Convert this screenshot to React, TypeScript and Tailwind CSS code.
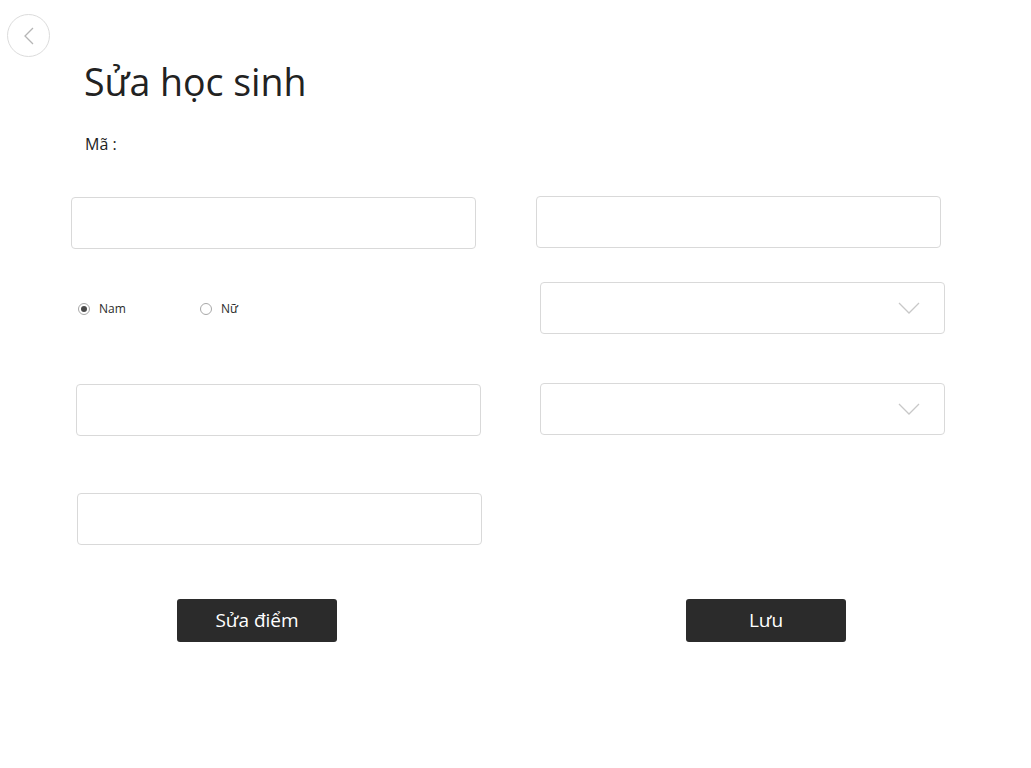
import React from "react";

function Field({ className = "" }: { className?: string }) {
  return <div className={`h-[52px] w-[405px] rounded-[4px] border border-[#d9d9d9] bg-white ${className}`} />;
}

function Combo({ className = "" }: { className?: string }) {
  return (
    <div className={`flex h-[52px] w-[405px] items-center justify-end rounded-[4px] border border-[#d9d9d9] bg-white pr-[24px] ${className}`}>
      <svg width="22" height="12" viewBox="0 0 22 12" fill="none">
        <path d="M1 1l10 10L21 1" stroke="#c8c8c8" strokeWidth="1.3" />
      </svg>
    </div>
  );
}

function Radio({ label, checked }: { label: string; checked?: boolean }) {
  return (
    <label className="flex items-center gap-[9px] text-[12px] text-[#2b2b2b]">
      <span className="flex h-[12px] w-[12px] items-center justify-center rounded-full border border-[#a8a8a8] bg-white">
        {checked && <span className="h-[6px] w-[6px] rounded-full bg-[#4a4a4a]" />}
      </span>
      {label}
    </label>
  );
}

export default function App() {
  return (
    <div className="h-[768px] w-[1031px] bg-white font-['Open_Sans',sans-serif] text-[#222]">
      <div className="pl-[7px] pt-[14px]">
        <button className="flex h-[43px] w-[43px] items-center justify-center rounded-full border border-[#dcdcdc] bg-white">
          <svg width="10" height="18" viewBox="0 0 10 18" fill="none">
            <path d="M9 1L1 9l8 8" stroke="#b5b5b5" strokeWidth="1.3" />
          </svg>
        </button>
      </div>

      <h1 className="ml-[84px] mt-[6px] text-[37.5px] leading-none font-normal text-[#222]">Sửa học sinh</h1>
      <p className="ml-[85px] mt-[35px] text-[16px] leading-none text-[#222]">Mã :</p>

      <div className="mt-[44px] flex items-start">
        <Field className="ml-[71px] mt-[1px]" />
        <Field className="ml-[60px]" />
      </div>

      <div className="mt-[33px] flex items-start">
        <div className="flex h-[52px] w-[540px] items-center pl-[78px] pt-[2px]">
          <div className="w-[122px]">
            <Radio label="Nam" checked />
          </div>
          <Radio label="Nữ" />
        </div>
        <Combo />
      </div>

      <div className="mt-[49px] flex items-start">
        <Field className="ml-[76px] mt-[1px]" />
        <Combo className="ml-[59px]" />
      </div>

      <div className="mt-[57px] flex">
        <Field className="ml-[77px]" />
      </div>

      <div className="mt-[54px] flex">
        <button className="ml-[177px] h-[43px] w-[160px] rounded-[3px] bg-[#2b2b2b] text-[19px] text-white">Sửa điểm</button>
        <button className="ml-[349px] h-[43px] w-[160px] rounded-[3px] bg-[#2b2b2b] text-[19px] text-white">Lưu</button>
      </div>
    </div>
  );
}
